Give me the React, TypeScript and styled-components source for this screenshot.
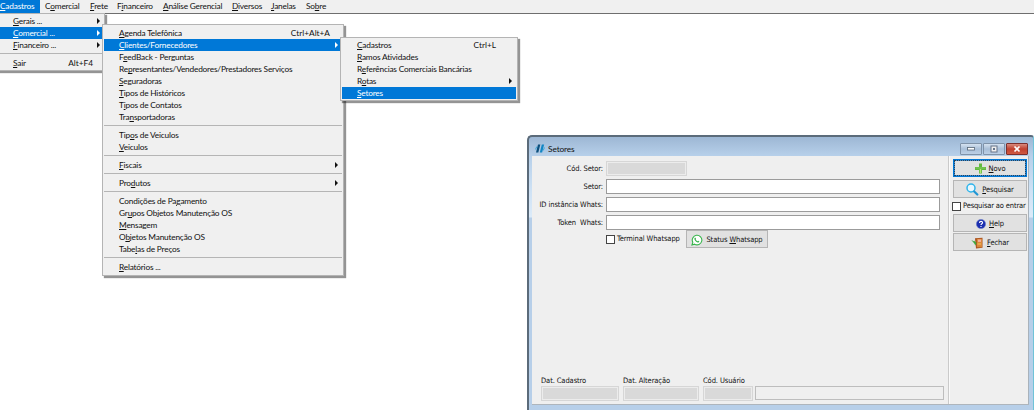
import React from "react";
import styled, { createGlobalStyle, css } from "styled-components";

const Global = createGlobalStyle`
  * { box-sizing: border-box; }
  body { margin: 0; background: #fff; overflow: hidden; }
`;

const Desktop = styled.div`
  position: relative;
  width: 1034px;
  height: 410px;
  overflow: hidden;
  background: #fff;
  color: #111;
  font-family: Lato, "Open Sans", sans-serif;
  font-size: 8.3px;
  letter-spacing: -0.2px;
  line-height: 12px;
  white-space: pre;
`;

const MenuBar = styled.nav`
  display: flex;
  height: 14px;
  background: #f0f0f0;
  border-bottom: 1px solid #6e6e6e;
`;

const BarItem = styled.div<{ $w: number; $active?: boolean }>`
  width: ${(p) => p.$w}px;
  height: 13px;
  padding-left: ${(p) => (p.$active ? 0 : 5)}px;
  background: ${(p) => (p.$active ? "#0078d7" : "transparent")};
  color: ${(p) => (p.$active ? "#fff" : "#111")};
`;

const Popup = styled.div<{ $x: number; $y: number; $w: number; $pad: string }>`
  position: absolute;
  left: ${(p) => p.$x}px;
  top: ${(p) => p.$y}px;
  width: ${(p) => p.$w}px;
  padding: ${(p) => p.$pad};
  background: #f0f0f0;
  border: 1px solid #b4b4b4;
  box-shadow: 2px 2px 1px rgba(0, 0, 0, 0.42);
`;

const MenuRow = styled.div<{ $active?: boolean }>`
  display: flex;
  justify-content: space-between;
  height: 12px;
  padding: 0 4px 0 15px;
  ${(p) => p.$active && css`
    background: #0078d7;
    color: #fff;
  `}
`;

const Shortcut = styled.span<{ $inset: number }>`
  margin-right: ${(p) => p.$inset}px;
  letter-spacing: 0;
`;

const Separator = styled.div`
  height: 6px;
  padding-top: 2px;
  &::after {
    content: "";
    display: block;
    height: 1px;
    background: #b5b5b5;
  }
`;

const Arrow = styled.i`
  align-self: center;
  border: 3px solid transparent;
  border-left: 3px solid currentColor;
  border-right: 0;
`;

const Frame = styled.section`
  position: absolute;
  left: 527px;
  top: 135px;
  width: 507px;
  height: 280px;
  padding: 0 4px 0 3px;
  border: 1px solid #5b6b7a;
  border-width: 2px 1px 0 2px;
  border-right-color: #6fc3d8;
  border-radius: 5px 3px 0 0;
  background: linear-gradient(#9db7d4 0, #b7d0ea 19px, #cfe2f5 55px, #dcebf9 80px, #b7cfe9 81px);
  font-family: "DejaVu Sans Condensed", "DejaVu Sans", sans-serif;
  font-stretch: condensed;
  font-size: 7.5px;
  letter-spacing: -0.1px;
`;

const TitleBar = styled.header`
  display: flex;
  align-items: center;
  height: 19px;
  padding: 4px 0 0 3px;
  gap: 3px;
`;

const TitleText = styled.span`
  flex: 1;
  font-family: Lato, "Open Sans", sans-serif;
  font-size: 8.3px;
  letter-spacing: -0.1px;
`;

const Controls = styled.div`
  display: flex;
  gap: 1px;
  margin-right: 1px;
`;

const ControlButton = styled.div<{ $close?: boolean }>`
  display: grid;
  place-items: center;
  width: 22px;
  height: 12px;
  border: 1px solid ${(p) => (p.$close ? "#7d2f2c" : "#7f92a8")};
  border-radius: 1px;
  background: ${(p) => (p.$close ? "linear-gradient(#d98b7e, #c1412f 50%, #cf5a42)" : "linear-gradient(#d5e2f0, #a9bfd8 50%, #bcd0e6)")};
`;

const Client = styled.div`
  display: grid;
  grid-template-columns: 417px 80px;
  height: 249px;
  background: #efefef;
  border-bottom: 1px solid #aeb5bc;
`;

const Form = styled.div`
  display: flex;
  flex-direction: column;
  padding: 3px 0 0;
  border-right: 1px solid #cacaca;
`;

const FieldRow = styled.div`
  display: flex;
  align-items: center;
  height: 18px;
`;

const FieldLabel = styled.label`
  width: 71px;
  margin-right: 3px;
  padding-top: 1px;
  text-align: right;
`;

const Input = styled.div`
  width: 334px;
  height: 15px;
  background: #fff;
  border: 1px solid #9b9b9b;
`;

const Disabled = styled.div<{ $w: number }>`
  width: ${(p) => p.$w}px;
  height: 15px;
  background: #d9d9d9;
  border: 1px solid #d6d6d6;
  box-shadow: inset 0 0 0 1px #ececec;
`;

const OptionRow = styled.div`
  display: flex;
  align-items: center;
  height: 18px;
  margin-top: -1px;
  padding-left: 74px;
`;

const Check = styled.span`
  width: 9px;
  height: 9px;
  margin-right: 2px;
  background: #fff;
  border: 1px solid #444;
`;

const OptionText = styled.span`
  width: 69px;
`;

const Button = styled.div<{ $w: number; $h: number; $focus?: boolean }>`
  display: flex;
  align-items: center;
  justify-content: center;
  gap: 3px;
  width: ${(p) => p.$w}px;
  height: ${(p) => p.$h}px;
  padding-top: 1px;
  background: #e1e1e1;
  border: 1px solid #b5b5b5;
  ${(p) => p.$focus && css`
    border-color: #0078d7;
    outline: 1px dotted #24435f;
    outline-offset: -2px;
    box-shadow: inset 0 0 0 1px #3c8ed2;
  `}
`;

const Footer = styled.div`
  display: flex;
  align-items: flex-end;
  margin: auto 0 3px 9px;
`;

const FooterField = styled.div<{ $gap: number }>`
  margin-right: ${(p) => p.$gap}px;
`;

const FooterCaption = styled.div`
  height: 11px;
`;

const NameBox = styled.div`
  width: 189px;
  height: 14px;
  margin-bottom: 1px;
  border: 1px solid #bdbdbd;
`;

const Side = styled.aside`
  padding: 3px 0 0 3px;
  border-left: 1px solid #fafafa;
  border-right: 1px solid #a9b2bb;
`;

const SideCheck = styled.div`
  display: flex;
  align-items: center;
  height: 16px;
  margin-left: -1px;
  letter-spacing: -0.16px;
`;

const Gap = styled.div<{ $h: number }>`
  height: ${(p) => p.$h}px;
`;

function Mnemonic({ text }: { text: string }) {
  const i = text.indexOf("&");
  if (i < 0) return <span>{text}</span>;
  return (
    <span>
      {text.slice(0, i)}
      <u>{text[i + 1]}</u>
      {text.slice(i + 2)}
    </span>
  );
}

type Entry = { text: string; key?: string; inset?: number; sub?: boolean; active?: boolean } | null;

function Menu({ items }: { items: Entry[] }) {
  return (
    <>
      {items.map((it, i) =>
        it === null ? (
          <Separator key={i} />
        ) : (
          <MenuRow key={i} $active={it.active}>
            <Mnemonic text={it.text} />
            {it.key && <Shortcut $inset={it.inset ?? 8}>{it.key}</Shortcut>}
            {it.sub && <Arrow />}
          </MenuRow>
        )
      )}
    </>
  );
}

const bar: [string, number][] = [
  ["C&omercial", 45], ["&Frete", 27], ["F&inanceiro", 46], ["&Análise Gerencial", 69],
  ["&Diversos", 39], ["&Janelas", 35], ["So&bre", 40],
];

const registers: Entry[] = [
  { text: "&Gerais ...", sub: true },
  { text: "&Comercial ...", sub: true, active: true },
  { text: "&Financeiro ...", sub: true },
  null,
  { text: "&Sair", key: "Alt+F4", inset: 7 },
];

const commercial: Entry[] = [
  { text: "&Agenda Telefônica", key: "Ctrl+Alt+A" },
  { text: "&Clientes/Fornecedores", sub: true, active: true },
  { text: "F&eedBack - Perguntas" },
  { text: "Re&presentantes/Vendedores/Prestadores Serviços" },
  { text: "&Seguradoras" },
  { text: "&Tipos de Históricos" },
  { text: "T&ipos de Contatos" },
  { text: "Tra&nsportadoras" },
  null,
  { text: "Tip&os de Veiculos" },
  { text: "&Veiculos" },
  null,
  { text: "&Fiscais", sub: true },
  null,
  { text: "Pro&dutos", sub: true },
  null,
  { text: "Condições de Pa&gamento" },
  { text: "Gr&upos Objetos Manutenção OS" },
  { text: "&Mensagem" },
  { text: "O&bjetos Manutenção OS" },
  { text: "Tabe&las de Preços" },
  null,
  { text: "&Relatórios ..." },
];

const clients: Entry[] = [
  { text: "&Cadastros", key: "Ctrl+L", inset: 16 },
  { text: "&Ramos Atividades" },
  { text: "R&eferências Comerciais Bancárias" },
  { text: "R&otas", sub: true },
  { text: "&Setores", active: true },
];

const LogoIcon = () => (
  <svg width="10" height="9" viewBox="0 0 10 9">
    <path d="M3 0.5h2.3L3.3 8.5H1z" fill="#0d4f7c" />
    <path d="M6.8 0.5h2.3L7.1 8.5H4.8z" fill="#1286c4" />
    <path d="M0.4 5.5l1.5-3M8.2 6.5l1.3-3" stroke="#3aa5d8" strokeWidth="1" />
  </svg>
);

const WhatsIcon = () => (
  <svg width="12" height="12" viewBox="0 0 12 12">
    <path d="M1 11l.8-2.7A4.8 4.8 0 1 1 3.6 10.2z" fill="#fff" stroke="#35b44a" strokeWidth="1.1" />
    <path d="M4.2 3.5l.9 1.3-.4.7c.5.9 1 1.3 1.8 1.7l.7-.5 1.2.8c-.3 1-1.3 1.1-2.3.7C4.8 7.6 3.9 6.6 3.5 5.4c-.2-.8 0-1.5.7-1.9z" fill="#35b44a" />
  </svg>
);

const PlusIcon = () => (
  <svg width="11" height="11" viewBox="0 0 11 11">
    <path d="M4 0.5h3v3.6h4v2.8H7v3.6H4V6.9H0V4.1h4z" fill="#62b840" />
    <path d="M4.8 6h1.4v4H4.8z" fill="#b5e878" />
    <path d="M.5 4.6h10v.8H.5z" fill="#8fd468" />
  </svg>
);

const SearchIcon = () => (
  <svg width="13" height="13" viewBox="0 0 13 13">
    <circle cx="5" cy="5" r="4" fill="#e8f7fe" stroke="#2fb4ea" strokeWidth="1.5" />
    <path d="M8.2 8.5l3.1 3" stroke="#2196d4" strokeWidth="2.2" strokeLinecap="round" />
  </svg>
);

const HelpIcon = () => (
  <svg width="10" height="10" viewBox="0 0 10 10">
    <circle cx="5" cy="5" r="4.6" fill="#1c2fb0" stroke="#6678c8" strokeWidth="0.6" />
    <path d="M3.5 3.9c0-2 3.1-2 3.1-.2C6.6 4.8 5 4.8 5 6M5 7.1v1" fill="none" stroke="#fff" strokeWidth="1.1" />
  </svg>
);

const DoorIcon = () => (
  <svg width="13" height="12" viewBox="0 0 13 12">
    <path d="M4 1.2L11.5.8v10L5 11.5z" fill="#a8501c" />
    <path d="M5.8 1.8H11v8.5H5.8z" fill="#d9873a" />
    <path d="M7 2.5h3v2.4H7z" fill="#f3b0a0" />
    <path d="M6.5 6.5H10v1H6.5z" fill="#f7c558" />
    <path d="M.3 3l3 1.5v-1L5.5 6 4.3 8.5 3.3 6.5z" fill="#3fa53c" />
  </svg>
);

export default function App() {
  return (
    <>
      <Global />
      <Desktop>
        <MenuBar>
          <BarItem $w={40} $active><Mnemonic text="&Cadastros" /></BarItem>
          {bar.map(([t, w]) => (
            <BarItem key={t} $w={w}><Mnemonic text={t} /></BarItem>
          ))}
        </MenuBar>

        <Popup $x={-3} $y={13} $w={108} $pad="1px 0 1px"><Menu items={registers} /></Popup>
        <Popup $x={102} $y={24} $w={242} $pad="2px 1px 2px"><Menu items={commercial} /></Popup>
        <Popup $x={340} $y={37} $w={178} $pad="1px 1px 1px"><Menu items={clients} /></Popup>

        <Frame>
          <TitleBar>
            <LogoIcon />
            <TitleText>Setores</TitleText>
            <Controls>
              <ControlButton>
                <svg width="8" height="4"><rect x=".5" y=".5" width="7" height="2.5" fill="#fff" stroke="#566576" strokeWidth=".8" /></svg>
              </ControlButton>
              <ControlButton>
                <svg width="8" height="8"><rect x="1" y="1" width="6" height="6" fill="#eee" stroke="#66758a" /><rect x="3" y="3" width="2" height="2" fill="#66758a" /></svg>
              </ControlButton>
              <ControlButton $close>
                <svg width="8" height="8"><path d="M1.5 1.5l5 5m0-5l-5 5" stroke="#fff" strokeWidth="1.7" /></svg>
              </ControlButton>
            </Controls>
          </TitleBar>
          <Client>
            <Form>
              <FieldRow><FieldLabel>Cód. Setor:</FieldLabel><Disabled $w={81} /></FieldRow>
              <FieldRow><FieldLabel>Setor:</FieldLabel><Input /></FieldRow>
              <FieldRow><FieldLabel>ID instância Whats:</FieldLabel><Input /></FieldRow>
              <FieldRow><FieldLabel>Token  Whats:</FieldLabel><Input /></FieldRow>
              <OptionRow>
                <Check />
                <OptionText>Terminal Whatsapp</OptionText>
                <Button $w={82} $h={18}><WhatsIcon /><Mnemonic text="Status &Whatsapp" /></Button>
              </OptionRow>
              <Footer>
                <FooterField $gap={4}><FooterCaption>Dat. Cadastro</FooterCaption><Disabled $w={78} /></FooterField>
                <FooterField $gap={4}><FooterCaption>Dat. Alteração</FooterCaption><Disabled $w={76} /></FooterField>
                <FooterField $gap={2}><FooterCaption>Cód. Usuário</FooterCaption><Disabled $w={50} /></FooterField>
                <NameBox />
              </Footer>
            </Form>
            <Side>
              <Button $w={74} $h={18} $focus><PlusIcon /><Mnemonic text="&Novo" /></Button>
              <Gap $h={3} />
              <Button $w={74} $h={18}><SearchIcon /><Mnemonic text="&Pesquisar" /></Button>
              <SideCheck><Check />Pesquisar ao entrar</SideCheck>
              <Button $w={74} $h={18}><HelpIcon /><Mnemonic text="&Help" /></Button>
              <Gap $h={1} />
              <Button $w={74} $h={18}><DoorIcon /><Mnemonic text="&Fechar" /></Button>
            </Side>
          </Client>
        </Frame>
      </Desktop>
    </>
  );
}
